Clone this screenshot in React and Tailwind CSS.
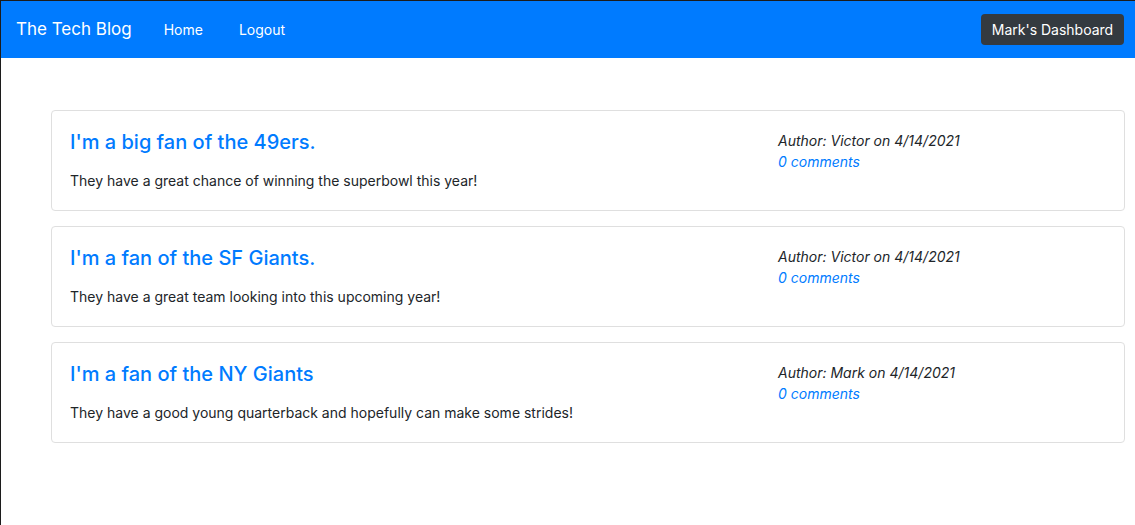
const posts = [
  { title: "I'm a big fan of the 49ers.", body: 'They have a great chance of winning the superbowl this year!', author: 'Victor', date: '4/14/2021' },
  { title: "I'm a fan of the SF Giants.", body: 'They have a great team looking into this upcoming year!', author: 'Victor', date: '4/14/2021' },
  { title: "I'm a fan of the NY Giants", body: 'They have a good young quarterback and hopefully can make some strides!', author: 'Mark', date: '4/14/2021' },
]

function PostCard({ post }) {
  return (
    <div className="flex rounded border border-[#dfdfdf] bg-white h-[101px]">
      {/* left: title + body */}
      <div className="w-[708px] pl-[18px] pt-[17px]">
        <h2 className="text-[20px] leading-[28px] font-medium text-[#007bff]">{post.title}</h2>
        <p className="mt-[15px] text-[14px] leading-[20px] text-[#212529]">{post.body}</p>
      </div>
      {/* right: meta */}
      <div className="pl-[18px] pt-[19px] text-[14px] leading-[21px] italic">
        <p className="text-[#212529]">Author: {post.author} on {post.date}</p>
        <a className="text-[#007bff]">0 comments</a>
      </div>
    </div>
  )
}

export default function App() {
  return (
    <div className="min-h-[525px] bg-white border-l border-t border-[#1c1c1c] font-['Inter',sans-serif]">
      <nav className="flex items-center h-[57px] bg-[#007bff] pl-[15px] pr-[11px]">
        <span className="text-[17px] text-white">The Tech Blog</span>
        <div className="flex gap-[36px] ml-[32px] text-[14px] text-white">
          <span>Home</span>
          <span>Logout</span>
        </div>
        <button className="ml-auto h-[31px] w-[143px] rounded bg-[#343a40] text-[14px] text-white">
          Mark's Dashboard
        </button>
      </nav>

      <div className="flex flex-col gap-[15px] pl-[50px] pr-[10px] pt-[52px]">
        {posts.map(p => <PostCard key={p.title} post={p} />)}
      </div>
    </div>
  )
}
